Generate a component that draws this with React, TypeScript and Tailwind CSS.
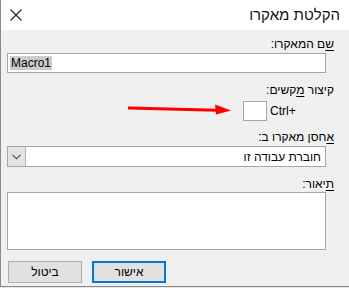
import React from "react";

export default function App() {
  const font = { fontFamily: '"Liberation Sans", "DejaVu Sans", sans-serif' };
  return (
    <div className="w-[349px] h-[288px] bg-[#e6e6e6] overflow-hidden" style={font}>
      <div className="w-[349px] h-[287px] border-l border-b border-[#8a8a8a] bg-[#f0f0f0] flex flex-col">
        {/* title bar */}
        <div className="h-[30px] bg-white flex items-center justify-between pl-[9px] pr-[9px]">
          <svg width="12" height="12" viewBox="0 0 12 12" className="mt-[-1px]">
            <path d="M0.5 0.5 L11.5 11.5 M11.5 0.5 L0.5 11.5" stroke="#222" strokeWidth="1.1" />
          </svg>
          <span dir="rtl" className="text-[15px] leading-[18px] text-[#111] mt-[-1px]">הקלטת מאקרו</span>
        </div>
        {/* body */}
        <div className="flex flex-col items-start pl-[6px]">
          <div dir="rtl" className="mt-[7px] w-[327px] text-[12px] leading-[15px] text-black h-[15px]">
            <span className="underline underline-offset-2">ש</span>ם המאקרו:
          </div>
          <div className="mt-[1px] w-[319px] h-[20px] border border-[#a5a5a5] bg-white flex items-center pl-[2px]">
            <span className="bg-[#cccccc] text-[12px] leading-[14px] text-black px-[1px]">Macro1</span>
          </div>
          <div dir="rtl" className="mt-[10px] w-[327px] text-[12px] leading-[15px] text-black h-[15px]">
            קיצור <span className="underline underline-offset-2">מ</span>קשים:
          </div>
          <div className="mt-[3px] w-[319px] h-[20px] flex items-center relative">
            <svg width="104" height="12" viewBox="0 0 104 12" className="absolute left-[121px] top-[2px]">
              <path d="M1 5 L89 7.2" stroke="#ff0000" strokeWidth="3" strokeLinecap="round" />
              <path d="M87 1.5 L103 7.5 L88 11.5 Z" fill="#ff0000" />
            </svg>
            <div className="ml-[236px] w-[24px] h-[20px] border border-[#a5a5a5] bg-white" />
            <span className="ml-[3px] text-[12px] leading-[14px] text-black">Ctrl+</span>
          </div>
          <div dir="rtl" className="mt-[9px] w-[327px] text-[12px] leading-[15px] text-black h-[15px]">
            <span className="underline underline-offset-2">א</span>חסן מאקרו ב:
          </div>
          <div className="mt-[1px] w-[319px] h-[21px] border border-[#a5a5a5] bg-white flex">
            <div className="w-[18px] h-full bg-[#e3e3e3] border-r border-[#b5b5b5] flex items-center justify-center">
              <svg width="9" height="6" viewBox="0 0 9 6">
                <path d="M0.5 0.8 L4.5 4.8 L8.5 0.8" stroke="#444" strokeWidth="1.1" fill="none" />
              </svg>
            </div>
            <div dir="rtl" className="flex-1 flex items-center pr-[4px] text-[12px] leading-[14px] text-black">
              חוברת עבודה זו
            </div>
          </div>
          <div dir="rtl" className="mt-[10px] w-[327px] text-[12px] leading-[15px] text-black h-[15px]">
            <span className="underline underline-offset-2">ת</span>יאור:
          </div>
          <div className="w-[319px] h-[58px] border border-[#a5a5a5] bg-white" />
          <div className="mt-[11px] flex gap-[10px] pl-[1px]">
            <div className="w-[74px] h-[22px] bg-[#e1e1e1] border border-[#adadad] flex items-center justify-center">
              <span dir="rtl" className="text-[12px] leading-[14px] text-black">ביטול</span>
            </div>
            <div className="w-[74px] h-[22px] bg-[#e1e1e1] border-2 border-[#0078d7] flex items-center justify-center">
              <span dir="rtl" className="text-[12px] leading-[14px] text-black">אישור</span>
            </div>
          </div>
        </div>
      </div>
    </div>
  );
}
